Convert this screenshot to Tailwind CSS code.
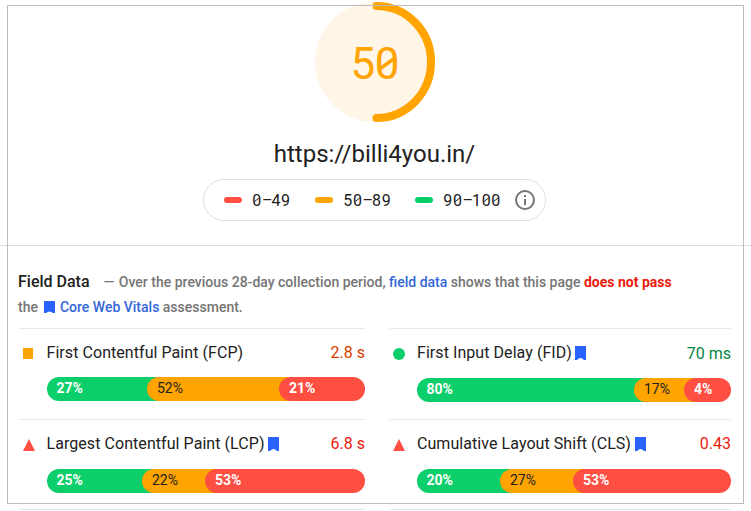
<!DOCTYPE html>
<html lang="en">
	<head>
		<meta charset="UTF-8" />
		<meta name="viewport" content="width=device-width, initial-scale=1.0" />
		<title>PageSpeed Insights</title>
		<script src="https://cdn.jsdelivr.net/npm/@tailwindcss/browser@4"></script>
	</head>
	<body class="relative w-[751px] h-[511px] overflow-hidden bg-white font-['Roboto',sans-serif] text-[#212121]">
		<header class="flex flex-col items-center h-[246px] pt-[2px] pr-[2px] border-b border-[#dedede]">
			<svg class="block w-[120px] h-[120px] shrink-0" viewBox="0 0 120 120">
				<circle cx="60" cy="60" r="60" fill="#fff6e7" />
				<path d="M61.5 4A54.500 56 0 0 1 61.500 116" fill="none" stroke="#ffa400" stroke-width="8" stroke-linecap="round" />
				<text x="35.500 59.800" y="76.500" fill="#ffa400" class="text-[44px]">50</text>
				<path d="M65.500 66.500L79 56.500" stroke="#ffa400" stroke-width="3.500" />
			</svg>
			<h1 class="mt-[17px] h-[30px] text-[24px] leading-[30px] whitespace-nowrap">https://billi4you.in/</h1>
			<div class="mt-[10px] flex items-center w-[343px] h-[42px] shrink-0 rounded-full border border-[#e0e0e0] pl-5">
				<span class="w-[18px] h-[6px] rounded-full bg-[#ff4e42]"></span>
				<svg class="ml-[10px] w-[40px] h-[20px]" viewBox="0 0 40 20">
					<text x="0.300 9.900 19.500 29.100" y="15.500" fill="#212121" class="text-[16px]">0–49</text>
					<path d="M2.200 11.800l5.200-4" stroke="#212121" />
				</svg>
				<span class="ml-[23px] w-[18px] h-[6px] rounded-full bg-[#ffa400]"></span>
				<svg class="ml-[10px] w-[50px] h-[20px]" viewBox="0 0 50 20">
					<text x="0.300 9.900 19.500 29.100 38.700" y="15.500" fill="#212121" class="text-[16px]">50–89</text>
					<path d="M11.800 11.800l5.200-4" stroke="#212121" />
				</svg>
				<span class="ml-[22px] w-[18px] h-[6px] rounded-full bg-[#0cce6b]"></span>
				<svg class="ml-[10px] w-[60px] h-[20px]" viewBox="0 0 60 20">
					<text x="0.300 9.900 19.500 29.100 38.700 48.300" y="15.500" fill="#212121" class="text-[16px]">90–100</text>
					<path d="M11.800 11.800l5.200-4M40.600 11.800l5.200-4M50.200 11.800l5.200-4" stroke="#212121" />
				</svg>
				<svg class="ml-[12px] w-[20px] h-[20px]" viewBox="0 0 20 20">
					<circle cx="10" cy="10" r="9" fill="none" stroke="#757575" stroke-width="2" />
					<path d="M9 5h2v2H9zM9 9h2v6H9z" fill="#757575" />
				</svg>
			</div>
		</header>

		<main class="pl-[19px] pr-[20px]">
			<div class="-ml-[1px] pt-[23px] h-[82px] text-[14px] leading-[25px] font-medium text-[#757575] whitespace-nowrap">
				<p><span class="text-[16px] text-[#212121] mr-[14px]">Field Data</span>— <span class="ml-[1px]">Over the previous 28-day collection period,</span> <a class="text-[#3367d6]">field data</a> shows that this page <span class="font-bold text-[#eb1c0c]">does not pass</span></p>
				<p>the <svg class="inline-block w-[11px] h-[12px] ml-[3px] mr-[1px] align-[-1px]" viewBox="0 0 11 12"><path d="M0 0h11v12h-2q-3.500-3-7 0h-2z" fill="#2962ff" /></svg> <a class="text-[#3367d6]">Core Web Vitals</a> assessment.</p>
			</div>

			<div class="grid grid-cols-[346px_341px] gap-x-[25px] grid-rows-[91px_90px_2px]">
				<!-- FCP -->
				<section class="border-t border-[#e8e8e8] pt-[12px]">
					<div class="flex items-center h-[24px] text-[16px]">
						<span class="w-[10px] h-[11px] ml-[4px] mr-[13.500px] mt-[1px] bg-[#ffa400]"></span>
						<h2 class="tracking-[0.06px]">First Contentful Paint (FCP)</h2>
						<span class="ml-auto text-[#d83c00]">2.8 s</span>
					</div>
					<div class="flex ml-[28px] mt-[12px] h-[24px] text-[14px] leading-[22px] text-white font-bold">
						<span class="w-[125px] -mr-[25px] pl-[9.500px] rounded-l-full bg-[#0cce6b]">27%</span>
						<span class="w-[157px] -mr-[25px] pl-[10px] rounded-l-full bg-[#ffa400] text-[#212121] font-normal">52%</span>
						<span class="flex-1 pl-[10px] rounded-full bg-[#ff4e42]">21%</span>
					</div>
				</section>
				<!-- FID -->
				<section class="border-t border-[#e8e8e8] pt-[12px]">
					<div class="flex items-center h-[24px] text-[16px]">
						<span class="w-[12px] h-[12px] ml-[3px] mr-[12px] mt-[2px] rounded-full bg-[#0cce6b]"></span>
						<h2 class="tracking-[0.06px]">First Input Delay (FID)</h2>
						<svg class="ml-[3.500px] w-[11px] h-[14px]" viewBox="0 0 11 14"><path d="M0 0h11v14h-2q-3.500-4-7 0h-2z" fill="#2962ff" /></svg>
						<span class="ml-auto mt-[1px] text-[#018642]">70 ms</span>
					</div>
					<div class="flex ml-[27px] mt-[13px] h-[24px] text-[14px] leading-[22px] text-white font-bold">
						<span class="w-[242px] -mr-[25px] pl-[9.500px] rounded-l-full bg-[#0cce6b]">80%</span>
						<span class="w-[75px] -mr-[25px] pl-[10px] rounded-l-full bg-[#ffa400] text-[#212121] font-normal">17%</span>
						<span class="flex-1 pl-[10px] rounded-full bg-[#ff4e42]">4%</span>
					</div>
				</section>
				<!-- LCP -->
				<section class="border-t border-[#e8e8e8] pt-[12px]">
					<div class="flex items-center h-[24px] text-[16px]">
						<svg class="w-[12px] h-[12px] ml-[4px] mr-[11.500px] mt-[1px]" viewBox="0 0 12 12"><path d="M6 0l6 12H0z" fill="#ff4e42" /></svg>
						<h2 class="tracking-[0.06px]">Largest Contentful Paint (LCP)</h2>
						<svg class="ml-[3.500px] w-[11px] h-[14px]" viewBox="0 0 11 14"><path d="M0 0h11v14h-2q-3.500-4-7 0h-2z" fill="#2962ff" /></svg>
						<span class="ml-auto text-[#eb1c0c]">6.8 s</span>
					</div>
					<div class="flex ml-[28px] mt-[13px] h-[24px] text-[14px] leading-[22px] text-white font-bold">
						<span class="w-[120px] -mr-[25px] pl-[9.500px] rounded-l-full bg-[#0cce6b]">25%</span>
						<span class="w-[88px] -mr-[25px] pl-[10px] rounded-l-full bg-[#ffa400] text-[#212121] font-normal">22%</span>
						<span class="flex-1 pl-[10px] rounded-full bg-[#ff4e42]">53%</span>
					</div>
				</section>
				<!-- CLS -->
				<section class="border-t border-[#e8e8e8] pt-[12px]">
					<div class="flex items-center h-[24px] text-[16px]">
						<svg class="w-[12px] h-[12px] ml-[3px] mr-[12px] mt-[1px]" viewBox="0 0 12 12"><path d="M6 0l6 12H0z" fill="#ff4e42" /></svg>
						<h2 class="tracking-[0.06px]">Cumulative Layout Shift (CLS)</h2>
						<svg class="ml-[3.500px] w-[11px] h-[14px]" viewBox="0 0 11 14"><path d="M0 0h11v14h-2q-3.500-4-7 0h-2z" fill="#2962ff" /></svg>
						<span class="ml-auto text-[#eb1c0c]">0.43</span>
					</div>
					<div class="flex ml-[27px] mt-[13px] h-[24px] text-[14px] leading-[22px] text-white font-bold">
						<span class="w-[108px] -mr-[25px] pl-[9.500px] rounded-l-full bg-[#0cce6b]">20%</span>
						<span class="w-[98px] -mr-[25px] pl-[10px] rounded-l-full bg-[#ffa400] text-[#212121] font-normal">27%</span>
						<span class="flex-1 pl-[10px] rounded-full bg-[#ff4e42]">53%</span>
					</div>
				</section>
				<div class="border-t border-[#e8e8e8]"></div>
				<div class="border-t border-[#e8e8e8]"></div>
			</div>
		</main>

		<!-- outline over the report -->
		<div class="absolute left-[7px] top-[5px] w-[737px] h-[499px] border border-[#bdbdbd] pointer-events-none"></div>
	</body>
</html>
